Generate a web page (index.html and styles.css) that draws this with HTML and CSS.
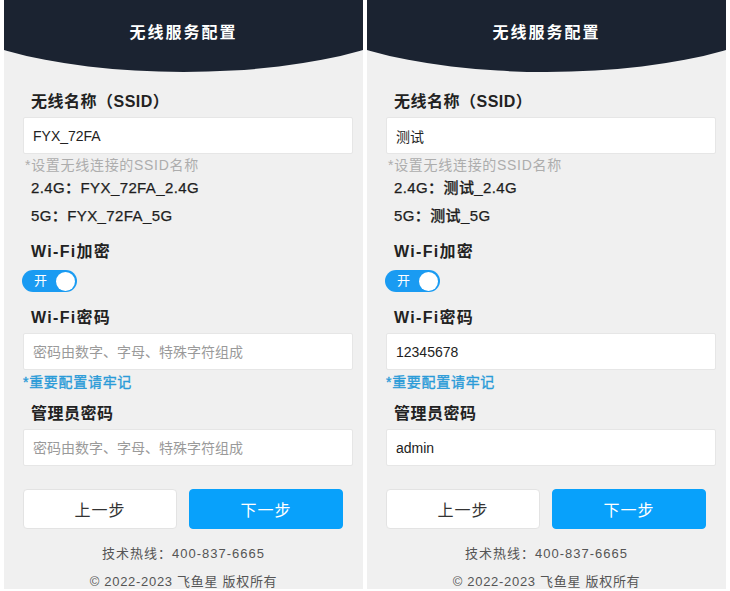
FILE: index.html
```html
<!DOCTYPE html>
<html lang="zh-CN">
<head>
<meta charset="utf-8">
<title>无线服务配置</title>
<link rel="stylesheet" href="styles.css">
</head>
<body>
<div class="page">
  <section class="panel">
    <header class="header"><h1 class="title">无线服务配置</h1></header>
    <div class="content">
      <div class="label label-first">无线名称（SSID）</div>
      <input class="field" type="text" value="FYX_72FA">
      <div class="hint">*设置无线连接的SSID名称</div>
      <div class="band">2.4G：FYX_72FA_2.4G</div>
      <div class="band">5G：FYX_72FA_5G</div>
      <div class="label label-enc label-wifi">Wi-Fi加密</div>
      <div class="switch"><span class="switch-text">开</span><span class="knob"></span></div>
      <div class="label label-pwd label-wifi">Wi-Fi密码</div>
      <input class="field" type="text" placeholder="密码由数字、字母、特殊字符组成">
      <div class="note">*重要配置请牢记</div>
      <div class="label label-admin">管理员密码</div>
      <input class="field" type="text" placeholder="密码由数字、字母、特殊字符组成">
      <div class="actions">
        <button class="btn btn-prev">上一步</button>
        <button class="btn btn-next">下一步</button>
      </div>
      <div class="footer footer-tel">技术热线：400-837-6665</div>
      <div class="footer footer-copy">© 2022-2023 飞鱼星 版权所有</div>
    </div>
  </section>
  <section class="panel">
    <header class="header"><h1 class="title">无线服务配置</h1></header>
    <div class="content">
      <div class="label label-first">无线名称（SSID）</div>
      <input class="field" type="text" value="测试">
      <div class="hint">*设置无线连接的SSID名称</div>
      <div class="band">2.4G：测试_2.4G</div>
      <div class="band">5G：测试_5G</div>
      <div class="label label-enc label-wifi">Wi-Fi加密</div>
      <div class="switch"><span class="switch-text">开</span><span class="knob"></span></div>
      <div class="label label-pwd label-wifi">Wi-Fi密码</div>
      <input class="field" type="text" value="12345678" placeholder="密码由数字、字母、特殊字符组成">
      <div class="note">*重要配置请牢记</div>
      <div class="label label-admin">管理员密码</div>
      <input class="field" type="text" value="admin" placeholder="密码由数字、字母、特殊字符组成">
      <div class="actions">
        <button class="btn btn-prev">上一步</button>
        <button class="btn btn-next">下一步</button>
      </div>
      <div class="footer footer-tel">技术热线：400-837-6665</div>
      <div class="footer footer-copy">© 2022-2023 飞鱼星 版权所有</div>
    </div>
  </section>
</div>
</body>
</html>
```

FILE: styles.css
```css
* { box-sizing: border-box; }
html, body { margin: 0; padding: 0; background: #ffffff; }
body {
  font-family: "Liberation Sans", "Noto Sans CJK SC", sans-serif;
  color: #222;
}
.page {
  display: flex;
  gap: 4px;
  padding-left: 4px;
  width: 730px;
  height: 591px;
}
.panel {
  width: 359px;
  height: 589px;
  background: #f0f0f0;
  overflow: hidden;
}
.header {
  height: 72px;
  background: #1b2331;
  clip-path: ellipse(249px 72px at 50% 0);
}
.title {
  margin: 0;
  padding-top: 22px;
  font-size: 16px;
  line-height: 22px;
  font-weight: 700;
  letter-spacing: 2px;
  color: #ffffff;
  text-align: center;
}
.content {
  padding: 0 10px 0 19px;
}
.label {
  padding-left: 8px;
  font-size: 16px;
  line-height: 22px;
  font-weight: 700;
  letter-spacing: 0.5px;
  color: #222;
  margin-bottom: 4px;
}
.label-wifi { letter-spacing: 1.3px; }
.label-first { margin-top: 19px; }
.label-enc { margin-top: 11px; margin-bottom: 0; }
.label-pwd { margin-top: 15px; }
.label-admin { margin-top: 12px; }
.field {
  display: block;
  width: 100%;
  height: 37px;
  margin: 0;
  padding: 0 9px;
  border: 1px solid #e6e6e6;
  border-radius: 2px;
  background: #ffffff;
  font-family: inherit;
  font-size: 14px;
  color: #222;
  outline: none;
}
.field::placeholder { color: #9a9a9a; }
.hint {
  margin-top: 2px;
  padding-left: 2px;
  font-size: 14px;
  line-height: 18px;
  letter-spacing: 0.7px;
  color: #adadad;
}
.band {
  padding-left: 8px;
  font-size: 15px;
  line-height: 28px;
  font-weight: 500;
  letter-spacing: 0.4px;
  color: #1e1e1e;
  -webkit-text-stroke: 0.25px #1e1e1e;
}
.band:first-of-type { margin-top: 1px; }
.switch {
  margin-top: 7px;
  margin-left: -1px;
  width: 55px;
  height: 22px;
  border-radius: 11px;
  background: #1a9bf2;
  display: flex;
  align-items: center;
  justify-content: space-between;
  padding: 0 2px 0 12px;
}
.switch-text {
  font-size: 13px;
  line-height: 22px;
  color: #ffffff;
}
.knob {
  width: 19px;
  height: 19px;
  border-radius: 50%;
  background: #ffffff;
}
.note {
  margin-top: 3px;
  font-size: 14px;
  line-height: 18px;
  letter-spacing: 0.7px;
  font-weight: 400;
  color: #2a9bd8;
  -webkit-text-stroke: 0.35px #2a9bd8;
}
.actions {
  display: flex;
  gap: 12px;
  margin-top: 23px;
  padding-right: 10px;
}
.btn {
  flex: 1;
  height: 40px;
  border-radius: 4px;
  font-family: inherit;
  font-size: 16px;
  letter-spacing: 1px;
  cursor: pointer;
}
.btn-prev {
  background: #ffffff;
  border: 1px solid #e3e3e3;
  color: #333;
}
.btn-next {
  background: #08a1fb;
  border: 1px solid #08a1fb;
  color: #ffffff;
}
.footer {
  text-align: center;
  font-size: 13px;
  line-height: 20px;
  letter-spacing: 1px;
  color: #555;
  margin-left: -19px;
  margin-right: -10px;
}
.footer-tel { margin-top: 15px; }
.footer-copy { margin-top: 8px; letter-spacing: 0.7px; }
```
